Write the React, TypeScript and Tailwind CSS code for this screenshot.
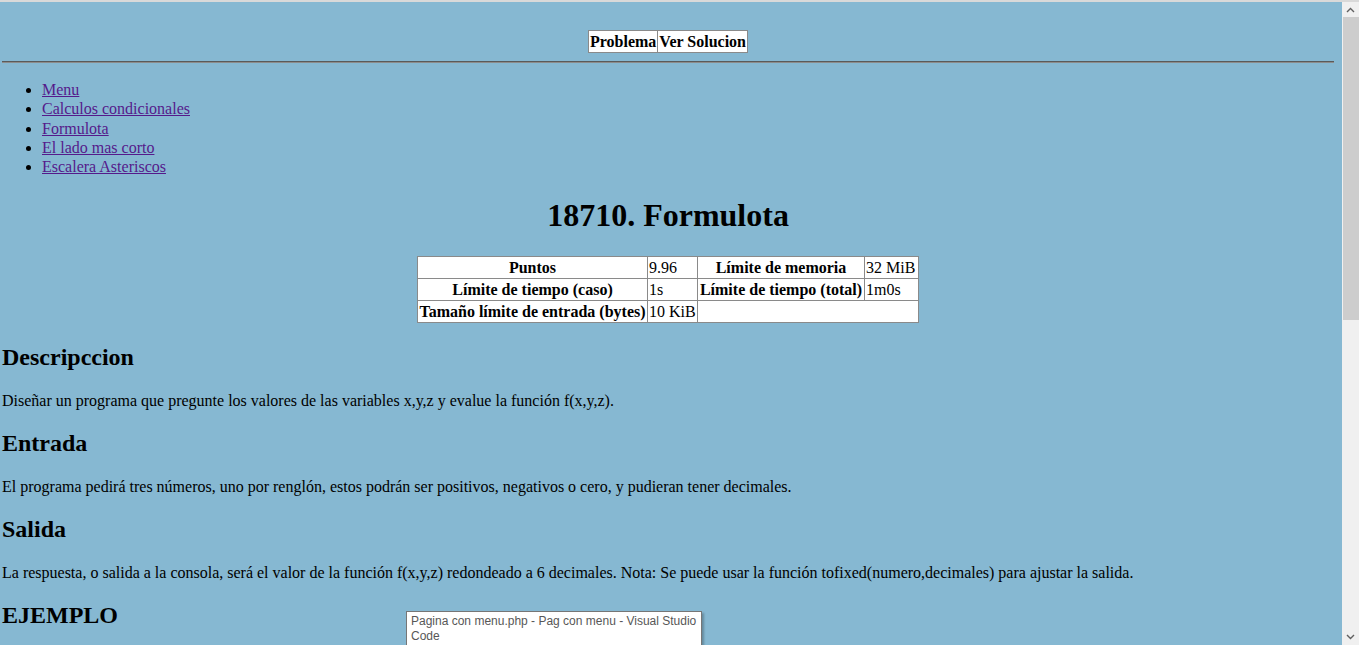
import React from "react";

const serif = "font-['Liberation_Serif','Times_New_Roman',serif]";

const menu = [
  "Menu",
  "Calculos condicionales",
  "Formulota",
  "El lado mas corto",
  "Escalera Asteriscos",
];

function Scrollbar() {
  return (
    <div className="w-[17px] h-full bg-[#f0f0f0] flex flex-col">
      <div className="h-[15px] flex items-center justify-center text-[#606060]">
        <svg width="9" height="6" viewBox="0 0 9 6">
          <path d="M1 5 L4.5 1.5 L8 5" stroke="currentColor" strokeWidth="1.4" fill="none" />
        </svg>
      </div>
      <div className="h-[303px] ml-[1px] bg-[#cdcdcd]" />
      <div className="flex-1" />
      <div className="h-[17px] flex items-center justify-center text-[#606060]">
        <svg width="9" height="6" viewBox="0 0 9 6">
          <path d="M1 1 L4.5 4.5 L8 1" stroke="currentColor" strokeWidth="1.4" fill="none" />
        </svg>
      </div>
    </div>
  );
}

export default function App() {
  const cell = "border border-[#8a8a8a] px-[1px] py-[1px] bg-white";
  return (
    <div className={`w-[1359px] h-[645px] overflow-hidden bg-[#d9d9d9] pt-[2px] ${serif} text-black text-[16px]`}>
      <div className="flex h-[643px]">
        <div className="relative flex-1 bg-[#86b8d2] overflow-hidden">
          <div className="ml-[2px] w-[1332px]">
            <div className="pt-[28px] flex justify-center">
              <table className="border-collapse border border-[#6e6e6e] font-bold leading-[19px]">
                <tbody>
                  <tr>
                    <td className={cell}>Problema</td>
                    <td className={cell}>Ver Solucion</td>
                  </tr>
                </tbody>
              </table>
            </div>
            <hr className="mt-[8px] border-0 border-t-[1px] border-b-[1px] border-t-[#5a5a5a] border-b-[#8c8c8c]" />

            <ul className="mt-[17px] pl-[40px] list-disc leading-[19.25px]">
              {menu.map((m) => (
                <li key={m}>
                  <a href="#" className="text-[#551a8b] underline">
                    {m}
                  </a>
                </li>
              ))}
            </ul>

            <h1 className="mt-[21px] text-center text-[32px] font-bold leading-[37px]">
              18710. Formulota
            </h1>

            <div className="mt-[22px] flex justify-center">
              <table className="border-collapse border border-[#6e6e6e] leading-[19px]">
                <tbody>
                  <tr>
                    <td className={`${cell} w-[230px] text-center font-bold`}>Puntos</td>
                    <td className={`${cell} w-[50px]`}>9.96</td>
                    <td className={`${cell} w-[167px] text-center font-bold`}>Límite de memoria</td>
                    <td className={`${cell} w-[54px]`}>32 MiB</td>
                  </tr>
                  <tr>
                    <td className={`${cell} text-center font-bold`}>Límite de tiempo (caso)</td>
                    <td className={cell}>1s</td>
                    <td className={`${cell} text-center font-bold`}>Límite de tiempo (total)</td>
                    <td className={cell}>1m0s</td>
                  </tr>
                  <tr>
                    <td className={`${cell} text-center font-bold`}>Tamaño límite de entrada (bytes)</td>
                    <td className={cell}>10 KiB</td>
                    <td className={cell} colSpan={2}></td>
                  </tr>
                </tbody>
              </table>
            </div>

            <h2 className="mt-[21px] text-[24px] font-bold leading-[27.6px]">Descripccion</h2>
            <p className="mt-[20px] leading-[18.4px]">
              Diseñar un programa que pregunte los valores de las variables x,y,z y evalue la función f(x,y,z).
            </p>
            <h2 className="mt-[20px] text-[24px] font-bold leading-[27.6px]">Entrada</h2>
            <p className="mt-[20px] leading-[18.4px]">
              El programa pedirá tres números, uno por renglón, estos podrán ser positivos, negativos o cero, y pudieran tener decimales.
            </p>
            <h2 className="mt-[20px] text-[24px] font-bold leading-[27.6px]">Salida</h2>
            <p className="mt-[20px] leading-[18.4px]">
              La respuesta, o salida a la consola, será el valor de la función f(x,y,z) redondeado a 6 decimales. Nota: Se puede usar la función tofixed(numero,decimales) para ajustar la salida.
            </p>
            <h2 className="mt-[20px] text-[24px] font-bold leading-[27.6px]">EJEMPLO</h2>
          </div>

          <div className="absolute left-[406px] top-[609px] w-[296px] bg-white border border-[#767676] shadow-[2px_2px_2px_rgba(0,0,0,0.25)] px-[4px] pt-[2px] pb-[4px] font-['Liberation_Sans',Arial,sans-serif] text-[12px] leading-[15px] text-[#575757] whitespace-nowrap overflow-hidden">
            Pagina con menu.php - Pag con menu - Visual Studio
            <br />
            Code
          </div>
        </div>
        <Scrollbar />
      </div>
    </div>
  );
}
